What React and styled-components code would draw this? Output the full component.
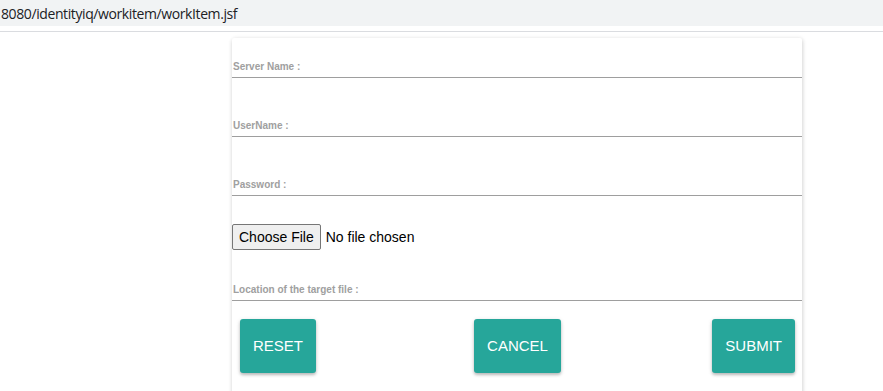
import React from "react"
import styled, { createGlobalStyle } from "styled-components"

const GlobalStyle = createGlobalStyle`
  html, body {
    margin: 0;
    padding: 0;
    background: #ffffff;
    font-family: "Liberation Sans", Arial, sans-serif;
    overflow: hidden;
  }
`

const BrowserBar = styled.div`
  height: 31px;
  border-bottom: 1px solid #dadce0;
  background: #ffffff;
`

const Omnibox = styled.div`
  height: 26px;
  background: #f1f3f4;
  display: flex;
  align-items: center;
  padding-left: 1px;
  font-family: "Open Sans", "Noto Sans", sans-serif;
  font-size: 14px;
  letter-spacing: -0.4px;
  color: #202124;
`

const Card = styled.div`
  margin: 6px 0 0 232px;
  width: 570px;
  height: 400px;
  background: #ffffff;
  border-radius: 2px;
  box-shadow: 0 2px 4px rgba(0, 0, 0, 0.14), 1px 0 4px rgba(0, 0, 0, 0.08);
  display: flex;
  flex-direction: column;
`

const Field = styled.div`
  height: ${(p) => p.$h}px;
  border-bottom: 1px solid #9e9e9e;
  display: flex;
  align-items: flex-end;
  box-sizing: border-box;
`

const Label = styled.label`
  font-family: "Liberation Sans", Arial, sans-serif;
  font-size: 10px;
  font-weight: bold;
  color: #a0a0a0;
  line-height: 11px;
  padding: 0 0 5px 1px;
`

const FileRow = styled.div`
  display: flex;
  align-items: center;
  margin-top: 28px;
  height: 26px;
  font-family: "Liberation Sans", Arial, sans-serif;
  font-size: 14px;
  color: #000000;
`

const FileButton = styled.button`
  height: 26px;
  padding: 0 6px;
  margin-right: 5px;
  font-family: "Liberation Sans", Arial, sans-serif;
  font-size: 14px;
  color: #000000;
  background: #efefef;
  border: 1px solid #767676;
  border-radius: 2px;
`

const Actions = styled.div`
  display: grid;
  grid-template-columns: 1fr auto 1fr;
  padding: 18px 7px 0 8px;
`

const ActionButton = styled.button`
  justify-self: ${(p) => p.$align || "center"};
  height: 54px;
  padding: 0 13px 1px;
  border: none;
  border-radius: 3px;
  background: #26a69a;
  color: #ffffff;
  font-family: "Liberation Sans", Arial, sans-serif;
  font-size: 15px;
  box-shadow: 0 2px 3px rgba(0, 0, 0, 0.22), 0 1px 5px rgba(0, 0, 0, 0.1);
`

export default function App() {
  return (
    <>
      <GlobalStyle />
      <BrowserBar>
        <Omnibox>8080/identityiq/workitem/workItem.jsf</Omnibox>
      </BrowserBar>
      <Card>
        <Field $h={40}>
          <Label>Server Name :</Label>
        </Field>
        <Field $h={59}>
          <Label>UserName :</Label>
        </Field>
        <Field $h={59}>
          <Label>Password :</Label>
        </Field>
        <FileRow>
          <FileButton>Choose File</FileButton>
          <span>No file chosen</span>
        </FileRow>
        <Field $h={51}>
          <Label>Location of the target file :</Label>
        </Field>
        <Actions>
          <ActionButton $align="start">RESET</ActionButton>
          <ActionButton>CANCEL</ActionButton>
          <ActionButton $align="end">SUBMIT</ActionButton>
        </Actions>
      </Card>
    </>
  )
}
